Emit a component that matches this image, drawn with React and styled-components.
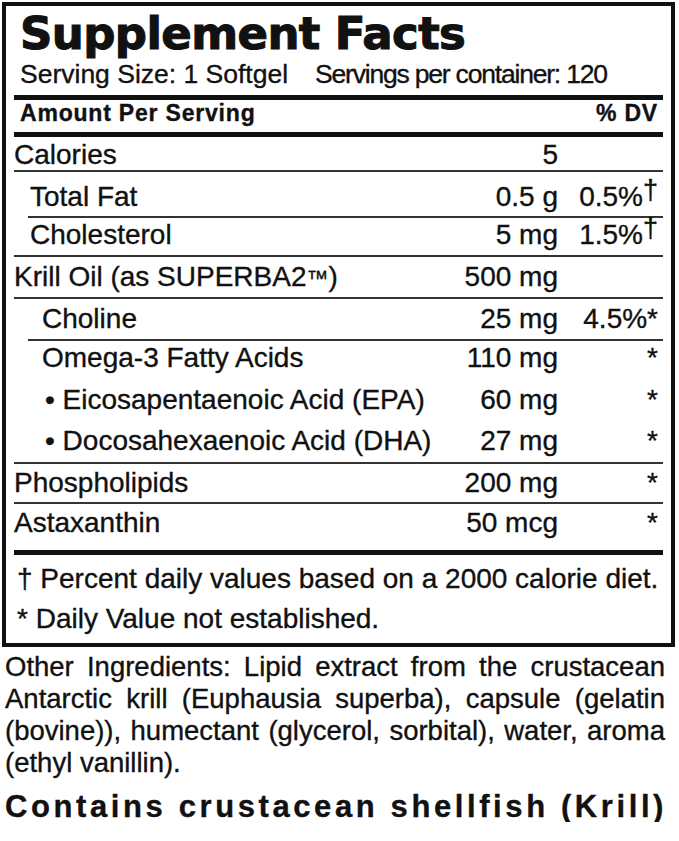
import React from "react"
import styled, { createGlobalStyle } from "styled-components"

const GlobalStyle = createGlobalStyle`
  html, body {
    margin: 0;
    padding: 0;
    background: #fff;
  }
  body {
    font-family: "Liberation Sans", Arial, sans-serif;
    color: #111;
    -webkit-text-stroke: 0.35px #111;
  }
`

const Page = styled.div`
  width: 679px;
  box-sizing: border-box;
  padding: 2px 4px 0 2px;
`

const Panel = styled.section`
  border: 4px solid #111;
  padding: 0 8px;
`

const Title = styled.h1`
  margin: 0;
  padding: 5px 0 0 6px;
  font-family: "DejaVu Sans", "Liberation Sans", sans-serif;
  font-weight: 700;
  font-size: 45px;
  line-height: 1;
  letter-spacing: -0.6px;
  -webkit-text-stroke: 1.1px #111;
`

const Serving = styled.div`
  display: flex;
  gap: 27px;
  padding: 5px 0 0 6px;
  font-size: 26.5px;
  line-height: 1;
`

const Tight = styled.span`
  letter-spacing: -1.2px;
`

const Rule = styled.div`
  height: ${(p) => p.$h || 5}px;
  margin-top: ${(p) => p.$mt || 0}px;
  background: #111;
`

const Head = styled.div`
  display: flex;
  justify-content: space-between;
  padding: 2px 5px 0 6px;
  margin-bottom: 7px;
  font-size: 23px;
  font-weight: 700;
  letter-spacing: 0.8px;
  line-height: 1;
`

const Row = styled.div`
  display: grid;
  grid-template-columns: 1fr auto 100px;
  margin-left: ${(p) => p.$line || 0}px;
  padding: ${(p) => p.$pt}px 5px ${(p) => p.$pb}px ${(p) => p.$indent || 0}px;
  border-bottom: ${(p) => (p.$rule ? "2px solid #333" : "none")};
  font-size: 28px;
  line-height: 1;
`

const Name = styled.span`
  white-space: nowrap;
`

const Amount = styled.span`
  text-align: right;
  white-space: nowrap;
`

const Dv = styled.span`
  text-align: right;
  white-space: nowrap;
`

const Dagger = styled.span`
  display: inline-block;
  font-size: 27px;
  transform: translateY(-7px);
`

const Mark = styled.span`
  font-size: 22px;
`

const Notes = styled.div`
  display: flex;
  flex-direction: column;
  gap: 12px;
  padding: 10px 0 10px 3px;
  font-size: 28px;
  line-height: 1;
`

const Ingredients = styled.div`
  margin: 4px 10px 0 3px;
  font-size: 27.5px;
  line-height: 32px;
`

const Line = styled.div`
  text-align: ${(p) => (p.$last ? "left" : "justify")};
  text-align-last: ${(p) => (p.$last ? "left" : "justify")};
`

const Allergen = styled.div`
  margin: 12px 0 0 3px;
  font-size: 31px;
  font-weight: 700;
  letter-spacing: 3.6px;
  line-height: 1;
  white-space: nowrap;
`

const rows = [
  { name: "Calories", amt: "5", pt: 4, pb: 1, rule: true },
  { name: "Total Fat", amt: "0.5 g", dv: "0.5%", mark: "†", line: 14, indent: 2, pt: 11, pb: 5, rule: true },
  { name: "Cholesterol", amt: "5 mg", dv: "1.5%", mark: "†", indent: 16, pt: 3, pb: 6, rule: true },
  { name: "Krill Oil (as SUPERBA2", tm: true, amt: "500 mg", pt: 6, pb: 6, rule: true },
  { name: "Choline", amt: "25 mg", dv: "4.5%*", line: 14, indent: 14, pt: 6, pb: 6, rule: true },
  { name: "Omega-3 Fatty Acids", amt: "110 mg", dv: "*", indent: 28, pt: 3, pb: 10 },
  { name: "• Eicosapentaenoic Acid (EPA)", amt: "60 mg", dv: "*", indent: 31, pt: 4, pb: 9 },
  { name: "• Docosahexaenoic Acid (DHA)", amt: "27 mg", dv: "*", indent: 31, pt: 4, pb: 7, rule: true },
  { name: "Phospholipids", amt: "200 mg", dv: "*", pt: 5, pb: 5, rule: true },
  { name: "Astaxanthin", amt: "50 mcg", dv: "*", pt: 5, pb: 13 },
]

export default function App() {
  return (
    <Page>
      <GlobalStyle />
      <Panel>
        <Title>Supplement Facts</Title>
        <Serving>
          <span>Serving Size: 1 Softgel</span>
          <Tight>Servings per container: 120</Tight>
        </Serving>
        <Rule $mt={7} />
        <Head>
          <span>Amount Per Serving</span>
          <span>% DV</span>
        </Head>
        <Rule />
        {rows.map((r) => (
          <Row
            key={r.name}
            $line={r.line}
            $indent={r.indent}
            $pt={r.pt}
            $pb={r.pb}
            $rule={r.rule}
          >
            <Name>
              {r.name}
              {r.tm && (
                <>
                  <Mark>™</Mark>)
                </>
              )}
            </Name>
            <Amount>{r.amt}</Amount>
            <Dv>
              {r.dv}
              {r.mark && <Dagger>{r.mark}</Dagger>}
            </Dv>
          </Row>
        ))}
        <Rule />
        <Notes>
          <span>† Percent daily values based on a 2000 calorie diet.</span>
          <span>* Daily Value not established.</span>
        </Notes>
      </Panel>
      <Ingredients>
        <Line>Other Ingredients: Lipid extract from the crustacean</Line>
        <Line>Antarctic krill (Euphausia superba), capsule (gelatin</Line>
        <Line>(bovine)), humectant (glycerol, sorbital), water, aroma</Line>
        <Line $last>(ethyl vanillin).</Line>
      </Ingredients>
      <Allergen>Contains crustacean shellfish (Krill)</Allergen>
    </Page>
  )
}
